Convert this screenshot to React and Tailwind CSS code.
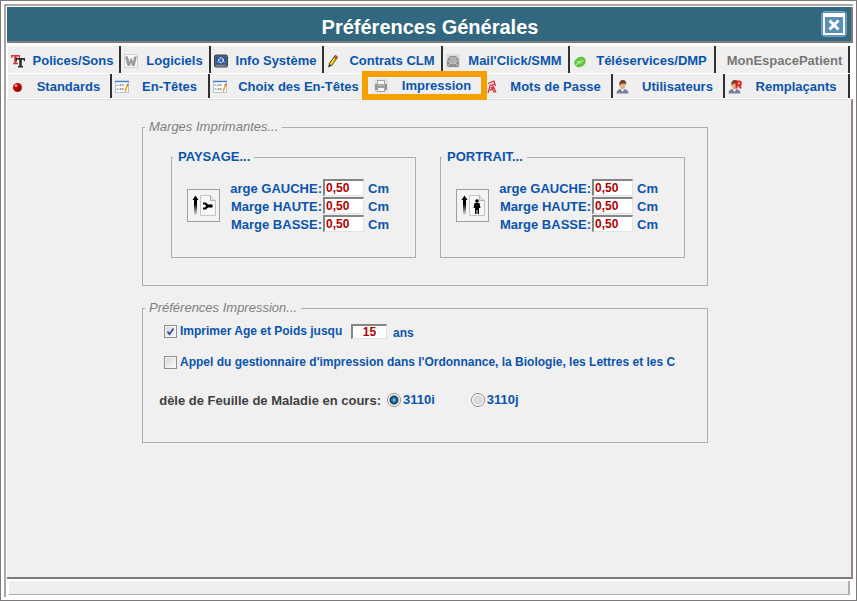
import React, { useState } from "react";

/* ===== TAB ICONS ===== */
function FontsIcon() {
  return (
    <svg width="14" height="14" viewBox="0 0 14 14">
      <path d="M0 1h9v3H7.800V2.500H5.700V9H7v1.200H2V9h1.200V2.500H1.200V4H0z" fill="#d9383a" />
      <path d="M4.500 4H14v3.200h-1.200V5.700h-2V12h1.200v1.500H7V12h1.200V5.700H5.800v1.500H4.500z" fill="#332a2a" />
    </svg>
  );
}

function SoftwareIcon() {
  return (
    <svg width="14" height="14" viewBox="0 0 14 14">
      <rect x="0.500" y="0.500" width="13" height="13" fill="#f8f8f8" stroke="#d2d2d2" />
      <path d="M1 2.500h3L5.200 8l1-3.500h1.800L9 8l1-5.500h3L10.500 12H8L7 8.500 6 12H3.500z" fill="#9a9a9a" />
    </svg>
  );
}

function SystemIcon() {
  return (
    <svg width="14" height="14" viewBox="0 0 14 14">
      <rect x="0.500" y="1" width="13" height="12" rx="1.500" fill="#5a6270" stroke="#3a3f48" />
      <rect x="2" y="2.500" width="10" height="7.500" fill="#29569c" />
      <circle cx="7" cy="6.300" r="2.300" fill="none" stroke="#dce8f8" strokeWidth="1.500" strokeDasharray="2 0.800" />
      <path d="M3 8.500l1.500-1M11 8.500l-1.500-1" stroke="#9cc0f0" />
      <path d="M2 12h10" stroke="#8b97a8" />
    </svg>
  );
}

function PencilIcon() {
  return (
    <svg width="14" height="14" viewBox="0 0 14 14">
      <path d="M2 10l5-7 2.500 1.800-5 7z" fill="#f3d023" stroke="#4d3c0c" strokeWidth="0.900" />
      <path d="M7 3l1.300-1.800 2.500 1.800L9.500 4.800z" fill="#e2574c" stroke="#6c2d25" strokeWidth="0.700" />
      <path d="M2 10l2.500 1.800L1 13.500z" fill="#2b2b2b" />
    </svg>
  );
}

function MailIcon() {
  return (
    <svg width="14" height="14" viewBox="0 0 14 14">
      <rect width="14" height="14" fill="#dedede" />
      <path d="M1 5.500L4 2h6l3 3.500V13H1z" fill="#8f8f8f" />
      <path d="M3.500 3h7v4L7 9 3.500 7z" fill="#b0b0b0" />
      <path d="M1 12.500l4.500-4M13 12.500l-4.500-4M1 6l6 4 6-4" fill="none" stroke="#dcdcdc" strokeWidth="0.800" />
    </svg>
  );
}

function RemoteIcon() {
  return (
    <svg width="14" height="14" viewBox="0 0 14 14">
      <ellipse cx="7" cy="8" rx="6" ry="4.800" fill="#5fc338" transform="rotate(-32 7 8)" />
      <path d="M3.500 8.500l2-1.200 1 2M6.500 6.500l2 3M9 5.500l1.500 2.500M2.500 11l6-3.500" fill="none" stroke="#d8f3c9" strokeWidth="0.900" />
    </svg>
  );
}

function BallIcon() {
  return (
    <svg width="14" height="14" viewBox="0 0 14 14">
      <circle cx="6.500" cy="7.500" r="4.500" fill="#c20606" />
      <circle cx="7" cy="8.500" r="2.800" fill="#8f0000" opacity="0.500" />
      <circle cx="5" cy="5.700" r="1.400" fill="#ff9d95" />
    </svg>
  );
}

function HeaderIcon() {
  return (
    <svg width="14" height="14" viewBox="0 0 14 14">
      <rect x="0.500" y="1.500" width="13" height="11" fill="#fff" stroke="#b9c4cf" />
      <path d="M0 1.500h14" stroke="#3f7fd0" strokeWidth="1.500" />
      <path d="M1.500 6l1-1.500 1 1.500M4.500 4.500h1.500v1.200H4.500M8.500 4.500H7.200v1.200h1.300M1.500 10l1-1.500 1 1.500M4.500 8.500h1.500v1.200H4.500M8.500 8.500H7.200v1.200h1.300" fill="none" stroke="#777" strokeWidth="0.700" />
      <path d="M10 11.500L12.500 5" stroke="#e8a820" strokeWidth="1.600" />
      <path d="M12.300 5.500l0.600-1.500" stroke="#d0453b" strokeWidth="1.600" />
    </svg>
  );
}

function PrinterIcon() {
  return (
    <svg width="14" height="14" viewBox="0 0 14 14">
      <rect width="14" height="14" fill="#e2e2e2" />
      <rect x="3.500" y="1.500" width="7" height="4" fill="#fafafa" stroke="#a5a5a5" />
      <path d="M1 5h2v1.500h8V5h2v6h-2V9H3v2H1z" fill="#959595" />
      <rect x="3.500" y="8.500" width="7" height="4" fill="#f5f5f5" stroke="#a5a5a5" />
    </svg>
  );
}

function KeyIcon() {
  return (
    <svg width="14" height="14" viewBox="0 0 14 14">
      <path d="M4 3.500L10 1l1.500 5M6.500 5.500l4-1.500M6.500 4.500L4 13M8.500 5l3.500 7.500M7 7l3.500 5.500M10 6.500L6 10.500" fill="none" stroke="#dc2b3b" strokeWidth="1.200" />
    </svg>
  );
}

function UserIcon({ replacement }) {
  return (
    <svg width="14" height="14" viewBox="0 0 14 14">
      <path d="M0.500 13.500c0-3 2-4.500 4-4.500h3c3 0 5 1.500 5 4.500z" fill="#75829d" />
      <path d="M4.500 9l2 3 2-3z" fill="#f1f1f1" />
      <ellipse cx="6.500" cy="5.500" rx="2.600" ry="3.800" fill="#e3b080" />
      <path d="M3.300 5.800C3 1.500 4.500 0 7 0s3.700 2 3 5L8.800 3.500 5 3.800z" fill="#6b4325" />
      {replacement && (
        <path d="M8.500 8.500v-7h2.500a1.900 1.900 0 010 3.800H8.500M10.800 5.300L13 8.500" fill="none" stroke="#e3231b" strokeWidth="1.900" />
      )}
    </svg>
  );
}

const topTabs = [
  { title: "Polices/Sons", icon: <FontsIcon /> },
  { title: "Logiciels", icon: <SoftwareIcon /> },
  { title: "Info Système", icon: <SystemIcon /> },
  { title: "Contrats CLM", icon: <PencilIcon /> },
  { title: "Mail'Click/SMM", icon: <MailIcon /> },
  { title: "Téléservices/DMP", icon: <RemoteIcon /> },
  { title: "MonEspacePatient", disabled: true },
];

const bottomTabs = [
  { title: "Standards", icon: <BallIcon /> },
  { title: "En-Têtes", icon: <HeaderIcon /> },
  { title: "Choix des En-Têtes", icon: <HeaderIcon /> },
  { title: "Impression", icon: <PrinterIcon />, active: true },
  { title: "Mots de Passe", icon: <KeyIcon /> },
  { title: "Utilisateurs", icon: <UserIcon /> },
  { title: "Remplaçants", icon: <UserIcon replacement /> },
];

function Tab({ item }) {
  if (item.active) {
    return (
      <button type="button" className="relative flex items-center">
        <span className="absolute -top-[3px] -right-1.5 -bottom-0.5 -left-2 z-10 flex items-center border-6 border-[#f59f00] bg-[#efefef] pl-1.5">
          {item.icon}
          <span className="flex-1 pl-1 text-center">{item.title}</span>
        </span>
      </button>
    );
  }
  return (
    <button
      type="button"
      disabled={item.disabled}
      className="flex items-center border-r-2 border-[#303030] pt-0.5 pl-[3px] whitespace-nowrap disabled:text-[#777]"
    >
      {item.icon}
      <span className="flex-1 pl-0.5 text-center">{item.title}</span>
    </button>
  );
}

/* ===== MARGINS ===== */
function PageIcon({ landscape }) {
  const gradient = landscape ? "arrow-paysage" : "arrow-portrait";
  return (
    <svg width="31" height="31" viewBox="0 0 31 31">
      <defs>
        <linearGradient id={gradient} x1="0" y1="0" x2="0" y2="1">
          <stop offset="0.450" stopColor="#000" />
          <stop offset="1" stopColor="#000" stopOpacity="0.050" />
        </linearGradient>
      </defs>
      <path d="M7.500 5.500L10.500 10H9v15H6V10H4.500z" fill={`url(#${gradient})`} />
      <path d="M12.500 5.500h10l5 5v15h-15z" fill="#f8f8f8" stroke="#c4c4c4" />
      <path d="M22.500 5.500v5h5" fill="#e2e2e2" stroke="#b0b0b0" />
      {landscape ? (
        <g>
          <circle cx="23" cy="16" r="1.800" />
          <path d="M15 12.500h3l2 2h2v3h-2l-2 2h-3v-2h2l1-1.500-1-1.500h-2z" />
        </g>
      ) : (
        <g>
          <circle cx="20" cy="11" r="1.800" />
          <path d="M17.500 13h5l1 5H22v6h-1.500v-4h-1v4H18v-6h-1.500z" />
        </g>
      )}
    </svg>
  );
}

const margins = [
  { side: "Gauche", label: "arge GAUCHE:" },
  { side: "Haute", label: "Marge HAUTE:" },
  { side: "Basse", label: "Marge BASSE:" },
];

function MarginBox({ title, landscape }) {
  const id = landscape ? "paysage" : "portrait";
  return (
    <fieldset className="flex min-w-0 flex-1 items-start border border-[#adadad] pt-3.5 pb-6 pl-[15px]">
      <legend className="-ml-3.5 border-l border-transparent px-1 leading-4">{title}</legend>
      <button
        type="button"
        aria-label={title}
        className="mt-2.5 mr-2.5 flex size-[33px] items-center justify-center border border-[#a0a0a0] bg-[#f4f4f4]"
      >
        <PageIcon landscape={landscape} />
      </button>
      <div className="flex flex-col">
        {margins.map(({ side, label }) => (
          <div key={side} className="flex h-[18px] items-start">
            <label
              htmlFor={`${id}-${side}`}
              className="mr-px w-[92px] pt-0.5 text-right leading-4 whitespace-nowrap"
            >
              {label}
            </label>
            <input
              id={`${id}-${side}`}
              defaultValue="0,50"
              className="h-[17px] w-[41px] border-t-2 border-r border-b border-l-2 border-t-[#858585] border-r-[#e3e3e3] border-b-[#e3e3e3] border-l-[#858585] bg-white pl-px text-xs text-[#b00000] outline-none"
            />
            <span className="ml-1 pt-0.5 leading-4">Cm</span>
          </div>
        ))}
      </div>
    </fieldset>
  );
}

/* ===== FORM CONTROLS ===== */
function Checkbox({ id, checked, onChange }) {
  return (
    <span className="grid size-[13px] shrink-0">
      <input
        id={id}
        type="checkbox"
        checked={checked}
        onChange={onChange}
        className="col-start-1 row-start-1 size-[13px] appearance-none border border-[#8e8f8f] bg-linear-to-br from-[#cfd3d6] to-white shadow-[inset_0_0_0_1px_#f4f4f4]"
      />
      {checked && (
        <svg className="pointer-events-none col-start-1 row-start-1" width="13" height="13" viewBox="0 0 13 13">
          <path d="M3.500 6.500l2 2.800L9.500 3.500" fill="none" stroke="#3c4f94" strokeWidth="1.800" />
        </svg>
      )}
    </span>
  );
}

function Radio({ value, checked, onChange }) {
  return (
    <label className="flex items-center gap-0.5">
      <input
        type="radio"
        name="feuille"
        value={value}
        checked={checked}
        onChange={onChange}
        className="size-3.5 appearance-none rounded-full border border-[#8e8f8f] bg-[radial-gradient(circle,#e9e9e9_0,#cfd2d5_4px,#fafafa_5px)] checked:bg-[radial-gradient(circle_at_50%_50%,#8fd6f5_0,#2a7ca8_2px,#12344d_4px,#f6f6f6_5px)]"
      />
      {value}
    </label>
  );
}

function App() {
  const [age, setAge] = useState(true);
  const [manager, setManager] = useState(false);
  const [sheet, setSheet] = useState("3110i");

  return (
    <div className="flex min-h-screen flex-col border border-[#7d787a] bg-white p-[3px] font-['Liberation_Sans',Arial,sans-serif] text-[13px] font-bold text-[#0b54ae]">
      <div className="flex flex-1 flex-col border-t-2 border-l-2 border-[#aaa6a8] pt-px pl-px">
        {/* ===== TITLE BAR ===== */}
        <header className="flex h-9 items-center border-r-2 border-b-2 border-[#7f7b7d] bg-[#31677f] pr-1 pl-8">
          <h1 className="flex-1 pt-1.5 text-center text-xl text-white">Préférences Générales</h1>
          <button
            type="button"
            aria-label="Fermer"
            className="flex size-[26px] items-center justify-center rounded-sm border border-[#6fa5c9] bg-[#5b8fb3] p-px"
          >
            <svg width="22" height="22" viewBox="0 0 22 22">
              <rect x="1" y="1" width="20" height="20" fill="#5b8fb3" stroke="#fff" strokeWidth="2" />
              <path d="M1 2.500h20" stroke="#fff" strokeWidth="3" />
              <path d="M6.500 7.500l9 9M15.500 7.500l-9 9" stroke="#fff" strokeWidth="3" />
            </svg>
          </button>
        </header>

        {/* ===== TABS ===== */}
        <nav className="flex flex-col gap-px bg-white pt-[3px] pr-[3px] pb-px pl-px">
          <div className="grid h-[27px] grid-cols-[113fr_90fr_113fr_119fr_127fr_146fr_134fr] bg-[#efefef]">
            {topTabs.map((item) => (
              <Tab key={item.title} item={item} />
            ))}
          </div>
          <div className="grid h-6 grid-cols-[104fr_98fr_160fr_111fr_132fr_112fr_125fr] bg-[#efefef]">
            {bottomTabs.map((item) => (
              <Tab key={item.title} item={item} />
            ))}
          </div>
        </nav>

        {/* ===== CONTENT ===== */}
        <main className="flex-1 border-t border-r-2 border-b-2 border-t-[#e2e2e2] border-r-[#8a8688] border-b-[#7f7b7d] bg-[#f0f0f0] pt-[19px] pr-2">
          <div className="mx-auto flex max-w-[566px] flex-col gap-3.5">
            <fieldset className="flex min-w-0 gap-6 border border-[#adadad] pt-3.5 pr-[22px] pb-[27px] pl-7">
              <legend className="-ml-[26px] px-1 leading-4 font-normal text-[#808080] italic">
                Marges Imprimantes...
              </legend>
              <MarginBox title="PAYSAGE..." landscape />
              <MarginBox title="PORTRAIT..." />
            </fieldset>

            <fieldset className="min-w-0 border border-[#adadad] pr-2 pb-5 pl-[21px]">
              <legend className="-ml-[19px] px-1 leading-4 font-normal text-[#808080] italic">
                Préférences Impression...
              </legend>
              <div className="flex h-[30px] items-center">
                <Checkbox id="age" checked={age} onChange={() => setAge(!age)} />
                <label htmlFor="age" className="ml-[3px] w-[168px] text-xs whitespace-nowrap">
                  Imprimer Age et Poids jusqu
                </label>
                <input
                  aria-label="Age maximum"
                  defaultValue="15"
                  className="mr-1.5 ml-[3px] h-[15px] w-9 border-t-2 border-r border-b border-l-2 border-t-[#858585] border-r-[#e3e3e3] border-b-[#e3e3e3] border-l-[#858585] bg-white text-center text-xs text-[#b00000] outline-none"
                />
                <span className="pt-1 text-xs">ans</span>
              </div>
              <div className="flex h-8 items-center">
                <Checkbox id="manager" checked={manager} onChange={() => setManager(!manager)} />
                <label htmlFor="manager" className="ml-[3px] text-xs whitespace-nowrap">
                  Appel du gestionnaire d'impression dans l'Ordonnance, la Biologie, les Lettres et les C
                </label>
              </div>
              <div className="flex h-11 items-center">
                <span className="mr-1.5 flex w-[217px] justify-end pt-0.5 whitespace-nowrap text-[#404040]">
                  dèle de Feuille de Maladie en cours:
                </span>
                <div className="flex gap-9">
                  <Radio value="3110i" checked={sheet === "3110i"} onChange={() => setSheet("3110i")} />
                  <Radio value="3110j" checked={sheet === "3110j"} onChange={() => setSheet("3110j")} />
                </div>
              </div>
            </fieldset>
          </div>
        </main>

        {/* ===== STATUS BAR ===== */}
        <footer className="mt-0.5 mr-[3px] mb-0.5 ml-0.5 h-[14px] border-r-2 border-b border-[#b0b0b0] bg-[#efefef]" />
      </div>
    </div>
  );
}

export default App;
